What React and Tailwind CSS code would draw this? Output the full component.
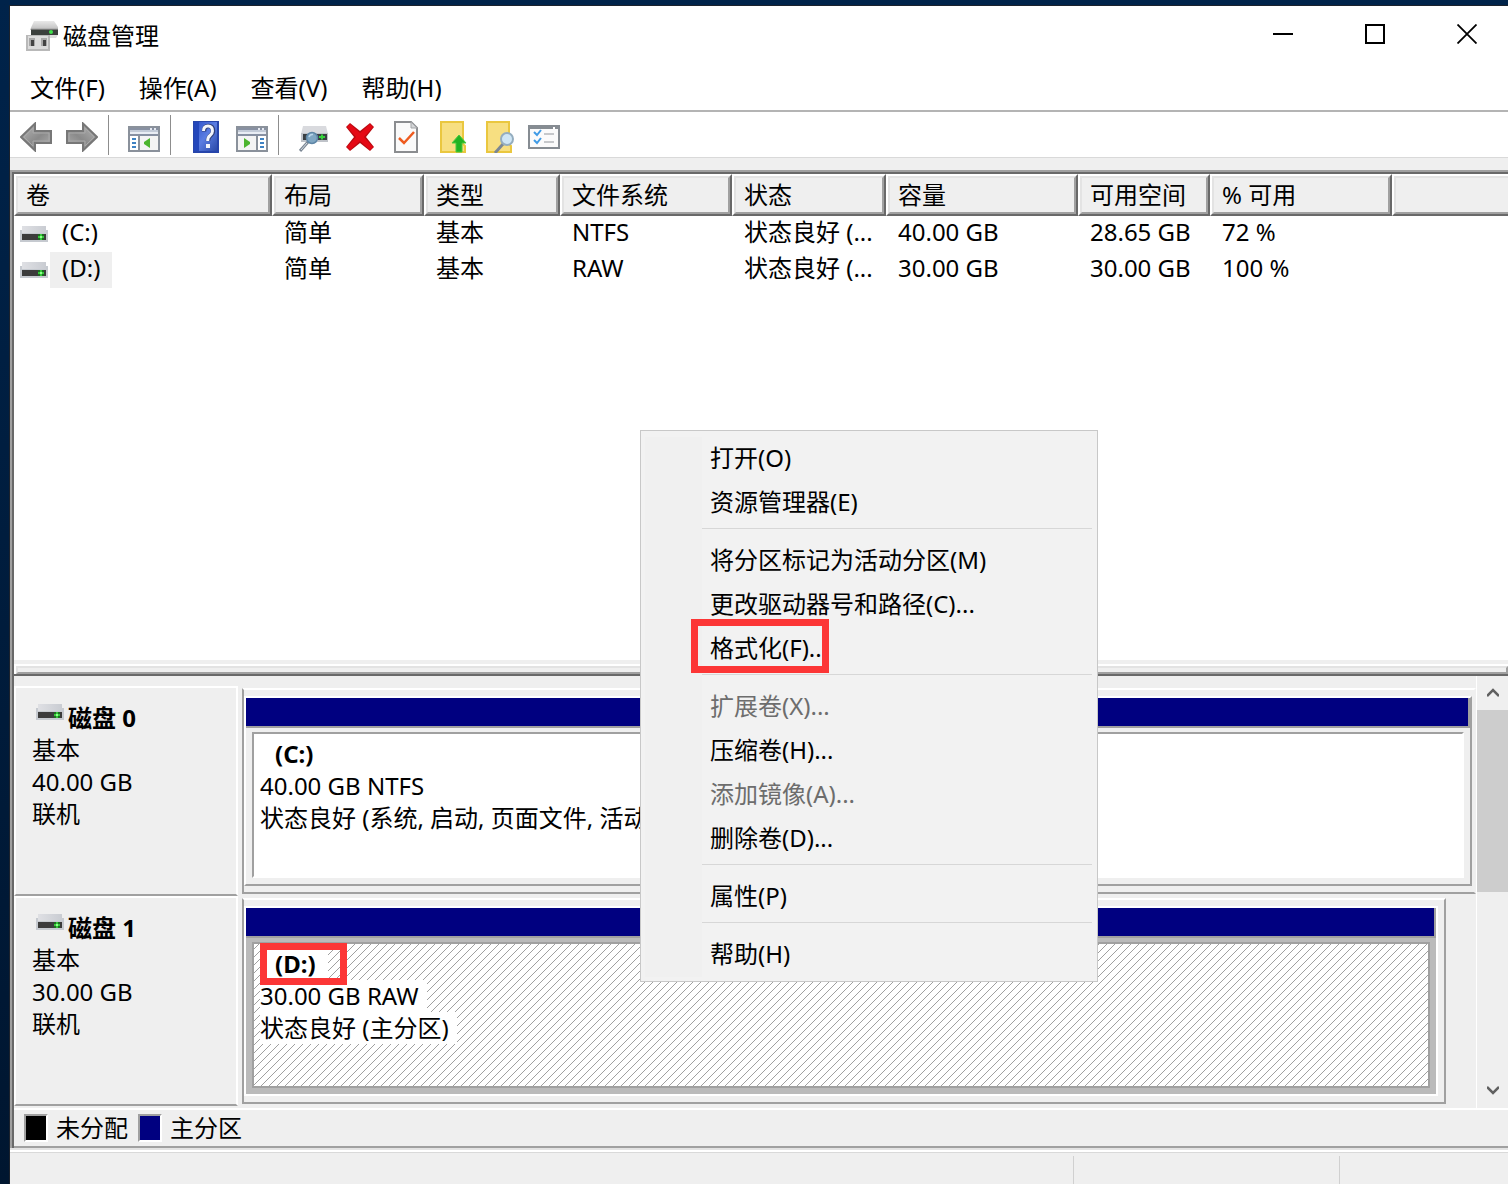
import React, { useState } from 'react';

const VOLUMES = [
    { name: '(C:)', layout: '简单', type: '基本', fs: 'NTFS', status: '状态良好 (...', capacity: '40.00 GB', free: '28.65 GB', percent: '72 %' },
    { name: '(D:)', layout: '简单', type: '基本', fs: 'RAW', status: '状态良好 (...', capacity: '30.00 GB', free: '30.00 GB', percent: '100 %', selected: true },
];

const COLUMNS = [
    { label: '卷', width: 'w-[258px]' },
    { label: '布局', width: 'w-[152px]' },
    { label: '类型', width: 'w-[136px]' },
    { label: '文件系统', width: 'w-[172px]' },
    { label: '状态', width: 'w-[154px]' },
    { label: '容量', width: 'w-[192px]' },
    { label: '可用空间', width: 'w-[132px]' },
    { label: '% 可用', width: 'w-[182px]' },
    { label: '', width: '' },
];

const MENU_ITEMS = [
    { label: '打开(O)' },
    { label: '资源管理器(E)' },
    null,
    { label: '将分区标记为活动分区(M)' },
    { label: '更改驱动器号和路径(C)...' },
    { label: '格式化(F)...', marked: true },
    null,
    { label: '扩展卷(X)...', disabled: true },
    { label: '压缩卷(H)...' },
    { label: '添加镜像(A)...', disabled: true },
    { label: '删除卷(D)...' },
    null,
    { label: '属性(P)' },
    null,
    { label: '帮助(H)' },
];

function DriveIcon() {
    return (
        <svg width="28" height="16" viewBox="0 0 28 16" shapeRendering="crispEdges" className="shrink-0">
            <defs>
                <linearGradient id="driveTop" x1="0" x2="1">
                    <stop offset="0" stopColor="#dfe0e4" />
                    <stop offset="1" stopColor="#c9ccd2" />
                </linearGradient>
            </defs>
            <rect x="2" y="0" width="24" height="6" fill="url(#driveTop)" />
            <rect x="0" y="4" width="28" height="12" fill="#c6cad0" />
            <rect x="2" y="4" width="24" height="3" fill="url(#driveTop)" />
            <rect x="2" y="8" width="24" height="6" fill="#3c3c3c" />
            <rect x="18" y="8" width="6" height="6" fill="#1f6b22" />
            <rect x="18" y="10" width="6" height="2" fill="#35c93a" />
            <rect x="20" y="8" width="2" height="6" fill="#35c93a" />
            <rect x="20" y="10" width="2" height="2" fill="#8dff8d" />
        </svg>
    );
}

function AppIcon() {
    return (
        <svg width="32" height="30" viewBox="0 0 32 30">
            <defs>
                <linearGradient id="appTop" x1="0" x2="0" y1="0" y2="1">
                    <stop offset="0" stopColor="#e9e9e9" />
                    <stop offset="1" stopColor="#bdbdbd" />
                </linearGradient>
            </defs>
            <path d="M8 0h20l4 6v3H4z" fill="url(#appTop)" />
            <path d="M5 8h27v6H5z" fill="#3a3f3c" />
            <path d="M5 7h27v1.500H5z" fill="#b4b4b4" />
            <circle cx="25" cy="11" r="2" fill="#3fe04a" />
            <path d="M24 14h8l-2 3h-6z" fill="#dcdcdc" />
            <path d="M0 14h24v16H0z" fill="#b9b9b9" />
            <path d="M2 15h20v13H2z" fill="#dcdcdc" />
            <rect x="3" y="17" width="6" height="8" fill="#a9a9a9" />
            <rect x="5" y="19" width="3" height="6" fill="#444" />
            <rect x="15" y="17" width="6" height="8" fill="#a9a9a9" />
            <rect x="17" y="19" width="3" height="6" fill="#444" />
        </svg>
    );
}

function ArrowIcon({ flip }) {
    return (
        <svg width="32" height="30" viewBox="0 0 32 30" className={flip ? '-scale-x-100' : ''}>
            <defs>
                <linearGradient id="arrowFill" x1="0" x2="1" y1="0" y2="1">
                    <stop offset="0" stopColor="#b8b8b8" />
                    <stop offset="0.550" stopColor="#8a8a8a" />
                    <stop offset="1" stopColor="#b0b0b0" />
                </linearGradient>
            </defs>
            <path d="M1 15L15 1.500V9h16v12H15v7.500z" fill="url(#arrowFill)" stroke="#777" strokeWidth="2" />
            <path d="M4 15L13 6v5h16v8H13v5z" fill="none" stroke="#a9a9a9" strokeWidth="1" />
        </svg>
    );
}

// Console window with a side pane, used for the tree and action pane toggles
function PaneIcon({ side }) {
    const left = side === 'left';
    return (
        <svg width="32" height="26" viewBox="0 0 32 26" shapeRendering="crispEdges">
            <rect width="32" height="26" fill="#8a919b" />
            <rect x="2" y="2" width="28" height="4" fill="#c3cbd8" />
            <rect x="2" y="2" width="28" height="2" fill="#8790a2" />
            <rect x="22" y="2" width="2" height="2" fill="#e5e9f1" />
            <rect x="26" y="2" width="2" height="2" fill="#e5e9f1" />
            <rect x="2" y="6" width="28" height="2" fill="#e9edf4" />
            <rect x="2" y="8" width="28" height="2" fill="#8790a2" />
            <rect x="2" y="10" width="28" height="14" fill="#f4f4f4" />
            <rect x={left ? 2 : 22} y="10" width="8" height="14" fill="#fff" />
            <rect x={left ? 10 : 20} y="10" width="2" height="14" fill="#8a919b" />
            {[12, 16, 20].map((y) => (
                <rect key={y} x={left ? 4 : 24} y={y} width="4" height="2" fill="#3f83c4" />
            ))}
            <path d={left ? 'M22 12v10l-6-4v-2z' : 'M8 12v10l6-4v-2z'} fill="#4db52f" shapeRendering="auto" />
        </svg>
    );
}

function HelpIcon() {
    return (
        <svg width="26" height="32" viewBox="0 0 26 32">
            <defs>
                <linearGradient id="helpFill" x1="0" x2="1" y1="0" y2="1">
                    <stop offset="0" stopColor="#2c50c8" />
                    <stop offset="0.500" stopColor="#5b7de2" />
                    <stop offset="1" stopColor="#2a49a8" />
                </linearGradient>
            </defs>
            <rect width="26" height="32" fill="#2745ab" />
            <rect x="1" y="1" width="23" height="29" fill="url(#helpFill)" />
            <rect x="1" y="1" width="5" height="29" fill="#2447bb" />
            <path d="M11 10.500Q11 5 15.500 5T20 10Q20 12.500 17.500 14.500T15 20" fill="none" stroke="#31417a" strokeWidth="4.500" />
            <path d="M10.500 10Q10.500 5 15 5T19.500 10Q19.500 12.500 17 14.500T14.700 20" fill="none" stroke="#f3f5fb" strokeWidth="3" />
            <rect x="13" y="23" width="4" height="4" fill="#f3f5fb" />
        </svg>
    );
}

function DriveSearchIcon() {
    return (
        <svg width="30" height="26" viewBox="0 0 30 26">
            <path d="M4 0h23l2 8H2z" fill="#d9dade" />
            <rect x="2" y="7" width="27" height="9" fill="#bfc3c9" />
            <rect x="4" y="8" width="24" height="6" fill="#3a3f42" />
            <path d="M20 11h6M23 8.500v5" stroke="#35d33c" strokeWidth="2" />
            <path d="M9 16l-8 9" stroke="#7b8794" strokeWidth="3" />
            <path d="M8 17l-6 7" stroke="#d4dbe2" strokeWidth="1" />
            <circle cx="13" cy="12" r="5.500" fill="#7fa6c2" stroke="#5e86a6" strokeWidth="1.500" />
            <path d="M10 11q1-3 4-2.500" stroke="#bcd8ea" strokeWidth="1.500" fill="none" />
        </svg>
    );
}

function DeleteIcon() {
    return (
        <svg width="28" height="28" viewBox="0 0 28 28">
            <path d="M0 4L4 0l10 8L24 0l4 4-8 10 8 10-4 4-10-8-10 8-4-4 8-10z" fill="#b80a10" />
            <path d="M1 4l3-3 10 9L24 1l3 3-9 10 9 10-3 3-10-9-10 9-3-3 9-10z" fill="#e50915" />
        </svg>
    );
}

function CheckDocIcon() {
    return (
        <svg width="24" height="32" viewBox="0 0 24 32">
            <path d="M1 1h16l6 6v24H1z" fill="#fafafa" stroke="#8b8d90" strokeWidth="2" />
            <path d="M17 1v6h6z" fill="#d4d6d8" stroke="#a3a5a8" strokeWidth="1" />
            <path d="M5 17l5 5 10-11" fill="none" stroke="#ee5a1e" strokeWidth="2.500" />
        </svg>
    );
}

function FolderIcon({ children }) {
    return (
        <svg width="28" height="32" viewBox="0 0 28 32">
            <path d="M1 1h22v22l2 2v6H1z" fill="#f7df81" stroke="#eac73f" strokeWidth="2" />
            {children}
        </svg>
    );
}

function ListIcon() {
    return (
        <svg width="32" height="24" viewBox="0 0 32 24">
            <rect x="1" y="1" width="30" height="22" fill="#fbfbfb" stroke="#868c92" strokeWidth="2" />
            <rect x="1" y="1" width="30" height="3" fill="#868c92" />
            <rect x="25" y="2" width="2" height="2" fill="#fff" />
            <path d="M6 7l3 3 4-5M6 15l3 3 4-5" fill="none" stroke="#3f9be6" strokeWidth="2" />
            <path d="M16 9h10M16 17h10" stroke="#c6c8cb" strokeWidth="2" />
        </svg>
    );
}

function ToolButton({ label, children }) {
    return (
        <button aria-label={label} className="flex h-full w-[46px] items-center justify-center pt-1">
            {children}
        </button>
    );
}

function ToolSeparator() {
    return <div className="mr-3 ml-[3px] h-[40px] w-px bg-[#8d8d8d]" />;
}

function TitleBar() {
    return (
        <header className="flex h-[60px] items-center justify-between bg-white pr-[31px] pl-4">
            <div className="flex items-center gap-[5px]">
                <AppIcon />
                <h1>磁盘管理</h1>
            </div>
            <div className="flex items-center gap-[72px] pb-1">
                <button aria-label="最小化">
                    <svg width="20" height="20" viewBox="0 0 20 20"><path d="M0 10h20" stroke="#000" strokeWidth="2" /></svg>
                </button>
                <button aria-label="最大化">
                    <svg width="20" height="20" viewBox="0 0 20 20"><rect x="1" y="1" width="18" height="18" fill="none" stroke="#000" strokeWidth="2" /></svg>
                </button>
                <button aria-label="关闭">
                    <svg width="20" height="20" viewBox="0 0 20 20"><path d="M.5.5l19 19M19.500.5l-19 19" stroke="#000" strokeWidth="1.800" /></svg>
                </button>
            </div>
        </header>
    );
}

function Toolbar() {
    return (
        <div className="flex h-[48px] items-center border-t-2 border-b border-t-[#b4b4b4] border-b-[#d9d9d9] bg-white pl-[3px]">
            <ToolButton label="后退"><ArrowIcon /></ToolButton>
            <ToolButton label="前进"><ArrowIcon flip /></ToolButton>
            <ToolSeparator />
            <ToolButton label="显示/隐藏控制台树"><div className="pt-1"><PaneIcon side="left" /></div></ToolButton>
            <ToolSeparator />
            <ToolButton label="帮助"><HelpIcon /></ToolButton>
            <ToolButton label="显示/隐藏操作窗格"><div className="pt-1"><PaneIcon side="right" /></div></ToolButton>
            <ToolSeparator />
            <ToolButton label="重新扫描磁盘"><div className="pt-1"><DriveSearchIcon /></div></ToolButton>
            <ToolButton label="删除"><DeleteIcon /></ToolButton>
            <ToolButton label="属性"><CheckDocIcon /></ToolButton>
            <ToolButton label="打开">
                <div className="pl-1">
                    <FolderIcon>
                        <path d="M19 14l7 8h-4v9h-6v-9h-4z" fill="#22b422" stroke="#4cc93f" strokeWidth="1" />
                    </FolderIcon>
                </div>
            </ToolButton>
            <ToolButton label="查找">
                <div className="pl-1">
                    <FolderIcon>
                        <path d="M17 23l-8 9" stroke="#7b8794" strokeWidth="3" />
                        <circle cx="21" cy="18" r="6" fill="#cfe6f5" stroke="#94adbf" strokeWidth="2" />
                    </FolderIcon>
                </div>
            </ToolButton>
            <ToolButton label="列表"><ListIcon /></ToolButton>
        </div>
    );
}

function VolumeTable() {
    return (
        <div className="min-h-[484px] flex-1 overflow-hidden bg-white">
            <table className="w-full table-fixed border-separate border-spacing-0 text-left">
                <thead>
                    <tr>
                        {COLUMNS.map((col, i) => (
                            <th key={i} className={`${col.width} group h-[42px] border-2 border-t-white border-r-[#696969] border-b-[#696969] border-l-white bg-[#efefef] p-0 font-normal last:border-r-0`}>
                                <div className="h-[38px] truncate border-2 border-t-[#e3e3e3] border-r-[#a0a0a0] border-b-[#a0a0a0] border-l-[#e3e3e3] pl-2 leading-[34px] group-last:border-r-0">
                                    {col.label}
                                </div>
                            </th>
                        ))}
                    </tr>
                </thead>
                <tbody>
                    {VOLUMES.map((v) => (
                        <tr key={v.name} className="h-[36px]">
                            <td className="p-0">
                                <div className="flex h-[36px] items-center gap-[2px] pl-[6px]">
                                    <DriveIcon />
                                    <span className={`h-[36px] px-3 leading-[32px] ${v.selected ? 'bg-[#efefef]' : ''}`}>{v.name}</span>
                                </div>
                            </td>
                            {[v.layout, v.type, v.fs, v.status, v.capacity, v.free, v.percent].map((text, i) => (
                                <td key={i} className="p-0 pb-1 pl-3 leading-[32px] whitespace-nowrap">{text}</td>
                            ))}
                            <td className="p-0" />
                        </tr>
                    ))}
                </tbody>
            </table>
        </div>
    );
}

function Splitter() {
    return (
        <div className="h-4 border-t-4 border-b-2 border-t-[#efefef] border-b-[#696969]">
            <div className="h-[10px] border-t-2 border-l-2 border-white">
                <div className="h-2 border-2 border-t-[#e3e3e3] border-r-[#a0a0a0] border-b-[#a0a0a0] border-l-[#e3e3e3]" />
            </div>
        </div>
    );
}

function Hatch() {
    return (
        <svg className="absolute inset-0 h-full w-full" shapeRendering="crispEdges">
            <defs>
                <pattern id="hatch" width="8" height="8" patternUnits="userSpaceOnUse">
                    {[0, 1, 2, 3, 4, 5, 6, 7].map((y) => (
                        <rect key={y} x={(12 - y) % 8} y={y} width="1" height="1" fill="#a0a0a0" />
                    ))}
                </pattern>
            </defs>
            <rect width="100%" height="100%" fill="url(#hatch)" />
        </svg>
    );
}

function DiskRow({ name, size, volume, children, selected }) {
    return (
        <section className="flex h-[210px]">
            <div className="w-[224px] shrink-0 border-2 border-t-white border-r-white border-b-[#a0a0a0] border-l-white pt-[14px] pl-4 leading-[32px]">
                <div className="flex gap-1 pl-1">
                    <div className="pt-[2px]"><DriveIcon /></div>
                    <h2 className="font-bold">{name}</h2>
                </div>
                <p>基本</p>
                <p>{size}</p>
                <p>联机</p>
            </div>
            <div className={`min-w-0 flex-1 border-b-2 border-[#efefef] pt-[2px] ${selected ? 'pr-[30px]' : ''}`}>
                <div className={`ml-1 h-[206px] border-2 border-t-white border-b-[#a0a0a0] border-l-[#a0a0a0] pt-[6px] ${selected ? 'border-r-[#a0a0a0] pr-[6px]' : 'border-r-[#efefef] pr-[2px]'}`}>
                    <div className={`flex h-[190px] flex-col border-2 border-t-white border-l-white ${selected ? 'border-r-white border-b-white' : 'border-r-[#a0a0a0] border-b-[#a0a0a0]'}`}>
                        <div className="h-[30px] border-r-2 border-b-2 border-[#a0a0a0] bg-[#000080]" />
                        <div className={`flex-1 p-1 px-[6px] pb-[6px] ${selected ? 'bg-[#bababa]' : ''}`}>
                            <div className={`relative h-full border-2 bg-white pl-[6px] leading-[32px] ${selected ? 'border-[#a0a0a0]' : 'border-t-[#a0a0a0] border-r-white border-b-white border-l-[#a0a0a0]'}`}>
                                {selected && <Hatch />}
                                <div className="relative flex flex-col items-start pt-1 whitespace-nowrap">
                                    <h3 className="bg-white pr-3 pl-[15px] font-bold">{volume}</h3>
                                    {children}
                                </div>
                                {selected && <div className="absolute top-[-1px] left-[6px] h-[42px] w-[87px] border-[7px] border-[#fc3636]" />}
                            </div>
                        </div>
                    </div>
                </div>
            </div>
        </section>
    );
}

function ScrollBar() {
    return (
        <div className="flex w-8 shrink-0 flex-col border-l border-white bg-[#efefef]">
            <button aria-label="向上滚动" className="flex h-[34px] items-center justify-center">
                <svg width="12" height="10" viewBox="0 0 12 10"><path d="M0 8l6-6 6 6" fill="none" stroke="#606060" strokeWidth="2.500" /></svg>
            </button>
            <div className="h-[182px] bg-[#cdcdcd]" />
            <div className="flex-1" />
            <button aria-label="向下滚动" className="flex h-[36px] items-center justify-center">
                <svg width="12" height="10" viewBox="0 0 12 10"><path d="M0 2l6 6 6-6" fill="none" stroke="#606060" strokeWidth="2.500" /></svg>
            </button>
        </div>
    );
}

function Legend() {
    return (
        <div className="flex h-[40px] items-center border-t-2 border-b-2 border-t-white border-b-[#a0a0a0] pl-[10px]">
            <span className="h-[28px] w-[24px] border-2 border-t-[#a0a0a0] border-r-white border-b-white border-l-[#a0a0a0] bg-black" />
            <span className="mr-[10px] ml-2">未分配</span>
            <span className="h-[28px] w-[24px] border-2 border-t-[#a0a0a0] border-r-white border-b-white border-l-[#a0a0a0] bg-[#000080]" />
            <span className="ml-2">主分区</span>
        </div>
    );
}

function ContextMenu({ onClose }) {
    return (
        <div role="menu" className="absolute top-[430px] left-[640px] w-[458px] border border-[#c8c8c8] bg-[#f2f2f2] pt-[6px] pr-[5px] pb-1 pl-1">
            {MENU_ITEMS.map((item, i) =>
                item ? (
                    <div key={i} className="relative border-l-[57px] border-[#f0f0f0]">
                        <button
                            role="menuitem"
                            disabled={item.disabled}
                            onClick={onClose}
                            className="block h-[44px] w-full pb-[2px] pl-2 text-left whitespace-nowrap disabled:text-[#6d6d6d]"
                        >
                            {item.label}
                        </button>
                        {item.marked && <div className="absolute top-[-8px] left-[-11px] h-[54px] w-[138px] border-[7px] border-[#fc3636]" />}
                    </div>
                ) : (
                    <div key={i} className="border-l-[57px] border-[#f0f0f0] pt-[3px] pb-[10px]">
                        <div className="h-px bg-[#d7d7d7]" />
                    </div>
                )
            )}
        </div>
    );
}

export default function App() {
    const [menuOpen, setMenuOpen] = useState(true);

    return (
        <div className="relative flex min-h-screen flex-col bg-linear-to-b from-[#00234a] to-[#001630] pt-[5px] pl-[9px] font-['Noto_Sans','Noto_Sans_CJK_SC',sans-serif] text-[24px] leading-[32px] text-black">
            <div className="flex flex-1 flex-col border-t border-l border-[#1c222c] bg-[#efefef]">
                <TitleBar />
                <nav className="flex h-[44px] items-center gap-[34px] bg-white pl-5">
                    <button>文件(F)</button>
                    <button>操作(A)</button>
                    <button>查看(V)</button>
                    <button>帮助(H)</button>
                </nav>
                <Toolbar />

                <main className="mt-3 flex flex-1 flex-col border-t-2 border-l-2 border-[#a0a0a0]">
                    <div className="flex flex-1 flex-col border-t-2 border-l-2 border-[#696969]">
                        <VolumeTable />
                        <Splitter />
                        <div className="flex" onContextMenu={(e) => { e.preventDefault(); setMenuOpen(true); }}>
                            <div className="min-w-0 flex-1 pt-[10px] pb-[2px]">
                                <DiskRow name="磁盘 0" size="40.00 GB" volume="(C:)">
                                    <p>40.00 GB NTFS</p>
                                    <p>状态良好 (系统, 启动, 页面文件, 活动</p>
                                </DiskRow>
                                <DiskRow name="磁盘 1" size="30.00 GB" volume="(D:)" selected>
                                    <p className="bg-white pr-2">30.00 GB RAW</p>
                                    <p className="bg-white pr-2">状态良好 (主分区)</p>
                                </DiskRow>
                            </div>
                            <ScrollBar />
                        </div>
                        <Legend />
                    </div>
                </main>

                <footer className="flex h-[36px] border-t-2 border-[#e3e3e3]">
                    <div className="flex flex-1 border-t-2 border-white">
                        <div className="flex flex-1 items-end border-t border-[#d9d9d9]">
                            <div className="flex-1" />
                            <div className="h-[28px] w-[266px] border-l border-[#d0d0d0]" />
                            <div className="h-[28px] w-[169px] border-l border-[#d0d0d0]" />
                        </div>
                    </div>
                </footer>
            </div>
            {menuOpen && <ContextMenu onClose={() => setMenuOpen(false)} />}
        </div>
    );
}
